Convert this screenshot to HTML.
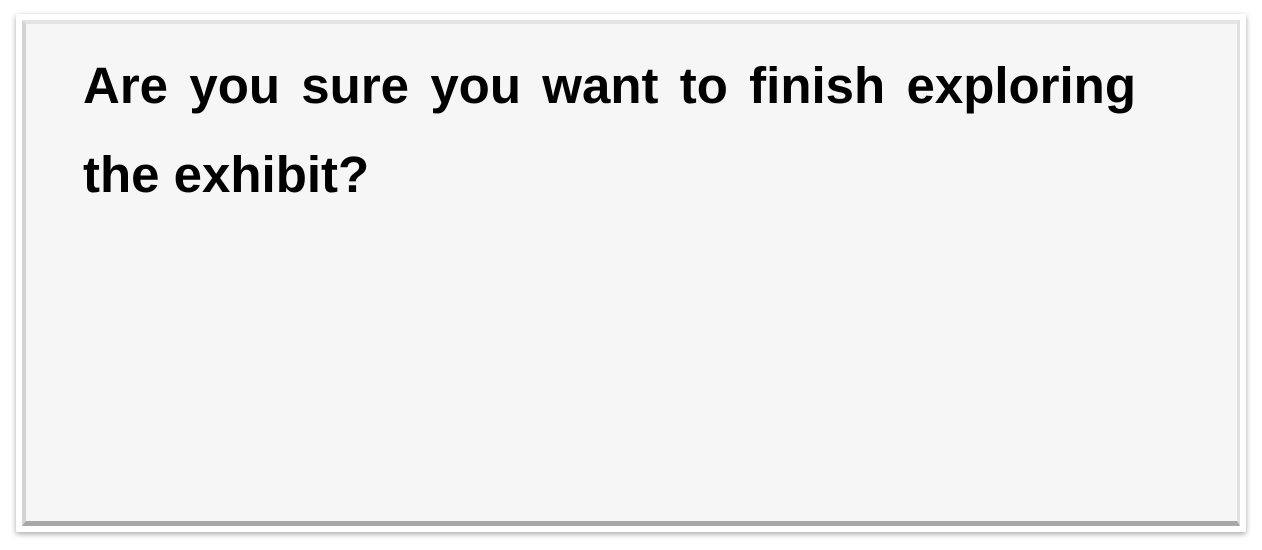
<!DOCTYPE html>
<html><head><style>
html,body{margin:0;padding:0;width:1262px;height:550px;background:#fff;overflow:hidden}
.outer{position:absolute;left:16px;top:14px;width:1230px;height:518px;background:#fff;box-shadow:0 2px 6px rgba(0,0,0,.35);border-radius:2px}
.inner{position:absolute;left:22px;top:20px;width:1218px;height:506px;background:#f6f6f6;box-sizing:border-box;border-left:4px solid #d4d4d4;border-top:4px solid #e4e4e4;border-right:3px solid #e0e0e0;border-bottom:5px solid #a8a8a8}
.t{position:absolute;left:83px;top:41px;width:1053px;font-family:"Liberation Sans",sans-serif;font-weight:bold;font-size:51px;line-height:89px;color:#000}
.l1{text-align:justify;text-align-last:justify;height:89px;white-space:nowrap}
</style></head><body>
<div class="outer"></div>
<div class="inner"></div>
<div class="t"><div class="l1">Are you sure you want to finish exploring</div><div>the exhibit?</div></div>
</body></html>
